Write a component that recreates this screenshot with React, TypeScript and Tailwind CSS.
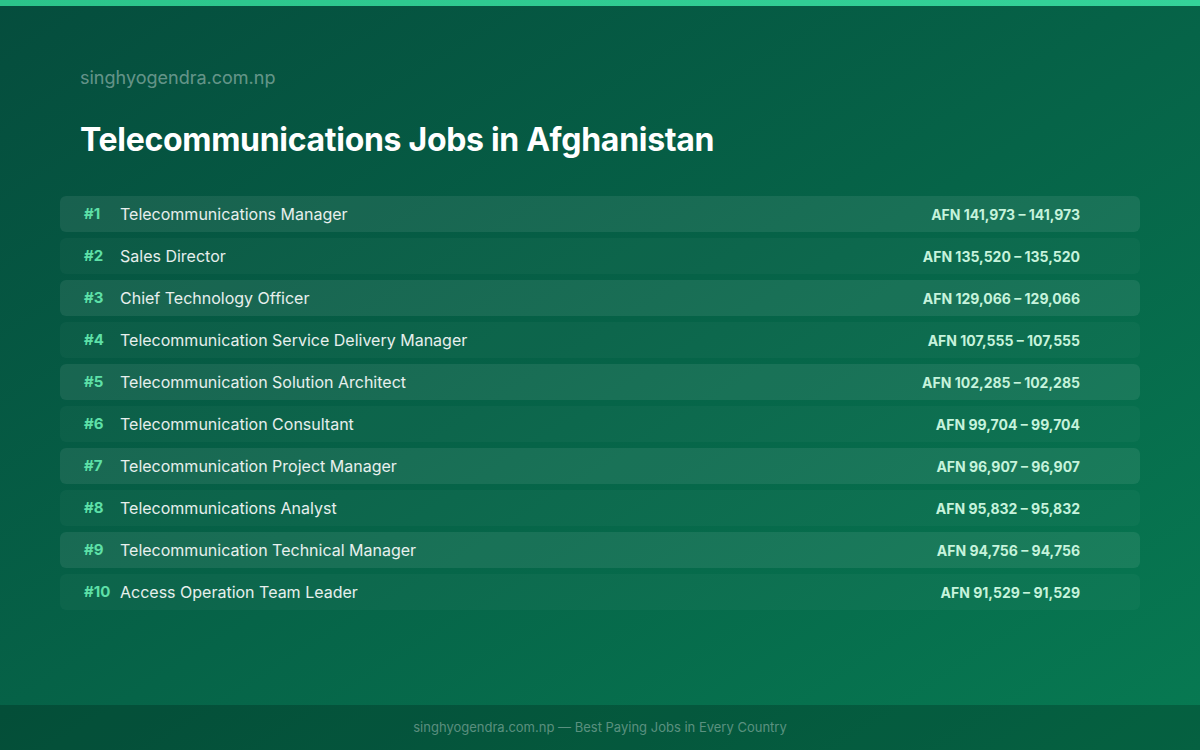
const jobs = [
  ['Telecommunications Manager', 'AFN 141,973 – 141,973'],
  ['Sales Director', 'AFN 135,520 – 135,520'],
  ['Chief Technology Officer', 'AFN 129,066 – 129,066'],
  ['Telecommunication Service Delivery Manager', 'AFN 107,555 – 107,555'],
  ['Telecommunication Solution Architect', 'AFN 102,285 – 102,285'],
  ['Telecommunication Consultant', 'AFN 99,704 – 99,704'],
  ['Telecommunication Project Manager', 'AFN 96,907 – 96,907'],
  ['Telecommunications Analyst', 'AFN 95,832 – 95,832'],
  ['Telecommunication Technical Manager', 'AFN 94,756 – 94,756'],
  ['Access Operation Team Leader', 'AFN 91,529 – 91,529'],
];

export default function App() {
  return (
    <div
      className="w-[1200px] h-[750px] flex flex-col bg-gradient-to-br from-[#054d3d] to-[#077a52] text-white overflow-hidden"
      style={{ fontFamily: 'Inter, "Noto Sans", sans-serif' }}
    >
      <div className="h-[6px] bg-gradient-to-r from-[#2bc48a] to-[#34d399]" />
      <div className="flex-1 px-[60px]">
        <div className="px-5 pt-[60px] text-[18px] text-white/40 leading-6">singhyogendra.com.np</div>
        <h1 className="px-5 mt-[30px] text-[32px] font-bold leading-10 tracking-[-0.3px]">
          Telecommunications Jobs in Afghanistan
        </h1>
        <div className="mt-[36px] flex flex-col gap-[6px]">
          {jobs.map(([title, pay], i) => (
            <div
              key={title}
              className={`h-9 flex items-center rounded-md pl-6 pr-[60px] ${i % 2 === 0 ? 'bg-white/[0.08]' : 'bg-white/[0.03]'}`}
            >
              <span className="w-9 text-[15px] font-bold text-[#5ee0a8]">#{i + 1}</span>
              <span className="flex-1 text-[16px] text-white/90">{title}</span>
              <span className="text-[14px] font-bold text-[#c6f3dc]">{pay}</span>
            </div>
          ))}
        </div>
      </div>
      <div className="h-[45px] flex items-center justify-center bg-black/20 text-[13px] text-white/35">
        singhyogendra.com.np — Best Paying Jobs in Every Country
      </div>
    </div>
  );
}
